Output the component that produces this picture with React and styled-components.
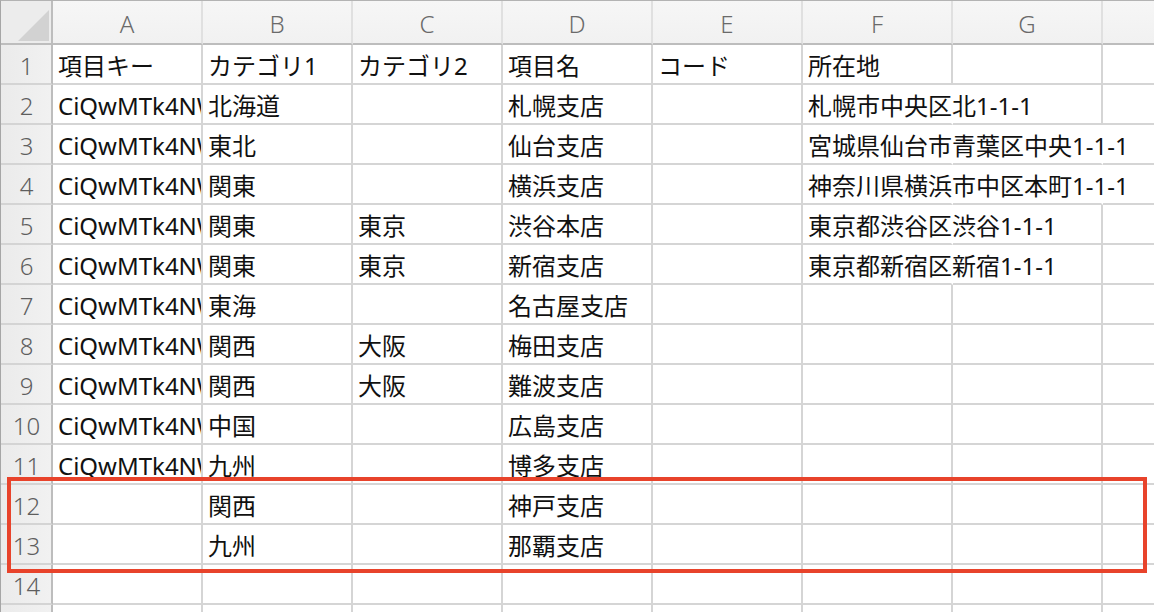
import React from "react";
import styled, { createGlobalStyle } from "styled-components";

const GlobalStyle = createGlobalStyle`
  html, body { margin: 0; padding: 0; background: #ffffff; }
  body { font-family: "Noto Sans", "Noto Sans CJK JP", sans-serif; }
`;

const Sheet = styled.div`
  position: relative;
  width: 1154px;
  height: 612px;
  overflow: hidden;
  box-sizing: border-box;
  border-top: 1px solid #b3b3b3;
  border-left: 1px solid #a6a6a6;
  background: #ffffff;
`;

const Grid = styled.div`
  display: grid;
  grid-template-columns: 52px repeat(8, 150px);
  grid-template-rows: 44px;
  grid-auto-rows: 40px;
`;

const Corner = styled.div`
  position: relative;
  box-sizing: border-box;
  background: #ececec;
  border-right: 2px solid #bdbdbd;
  border-bottom: 2px solid #bdbdbd;
  &::after {
    content: "";
    position: absolute;
    left: 17px;
    top: 9px;
    width: 31px;
    height: 31px;
    background: #d2d2d2;
    clip-path: polygon(100% 0, 100% 100%, 0 100%);
  }
`;

const ColHead = styled.div`
  box-sizing: border-box;
  display: flex;
  align-items: center;
  justify-content: center;
  background: linear-gradient(#f6f6f6, #f1f1f1);
  border-right: 2px solid #e0e0e0;
  border-bottom: 2px solid #bdbdbd;
  color: #6a6a6a;
  font-family: "Noto Sans", sans-serif;
  font-size: 24px;
  font-weight: 300;
  padding-top: 2px;
`;

const RowHead = styled.div`
  box-sizing: border-box;
  display: flex;
  align-items: center;
  justify-content: center;
  background: linear-gradient(90deg, #ebebeb, #f1f1f1);
  border-right: 2px solid #bdbdbd;
  border-bottom: 2px solid #d4d4d4;
  color: #5e5e5e;
  font-family: "Noto Sans", sans-serif;
  font-size: 24px;
  font-weight: 300;
  padding-left: 1px;
  padding-top: 3px;
`;

const Cell = styled.div`
  box-sizing: border-box;
  display: flex;
  align-items: center;
  padding-left: 5px;
  padding-top: 3px;
  min-width: 0;
  border-right: 2px solid ${(p) => (p.$spill ? "transparent" : "#d5d5d5")};
  border-bottom: 2px solid #d5d5d5;
  overflow: ${(p) => (p.$spill ? "visible" : "hidden")};
  color: #111111;
  font-size: 24px;
  white-space: nowrap;
  position: relative;
  z-index: ${(p) => (p.$spill ? 1 : 0)};
`;

const Text = styled.span`
  line-height: 1;
`;

const Highlight = styled.div`
  position: absolute;
  left: 6px;
  top: 476px;
  width: 1140px;
  height: 96px;
  box-sizing: border-box;
  border: 4px solid #e8432b;
  pointer-events: none;
  z-index: 5;
`;

const KEY = "CiQwMTk4NWFkLTBiYzMtNDk";

const columns = ["A", "B", "C", "D", "E", "F", "G", ""];

const rows = [
  ["項目キー", "カテゴリ1", "カテゴリ2", "項目名", "コード", "所在地"],
  [KEY, "北海道", "", "札幌支店", "", "札幌市中央区北1-1-1"],
  [KEY, "東北", "", "仙台支店", "", "宮城県仙台市青葉区中央1-1-1"],
  [KEY, "関東", "", "横浜支店", "", "神奈川県横浜市中区本町1-1-1"],
  [KEY, "関東", "東京", "渋谷本店", "", "東京都渋谷区渋谷1-1-1"],
  [KEY, "関東", "東京", "新宿支店", "", "東京都新宿区新宿1-1-1"],
  [KEY, "東海", "", "名古屋支店"],
  [KEY, "関西", "大阪", "梅田支店"],
  [KEY, "関西", "大阪", "難波支店"],
  [KEY, "中国", "", "広島支店"],
  [KEY, "九州", "", "博多支店"],
  ["", "関西", "", "神戸支店"],
  ["", "九州", "", "那覇支店"],
  [],
  [],
];

const textWidth = (s) =>
  [...s].reduce((w, ch) => w + (ch.charCodeAt(0) > 0x2e80 ? 24 : 12), 0);

function layoutRow(values) {
  const cells = columns.map((_, i) => values[i] || "");
  const spill = cells.map(() => false);
  cells.forEach((v, i) => {
    if (!v) return;
    let need = Math.ceil((textWidth(v) + 10) / 150);
    let j = i;
    while (need > 1 && j + 1 < cells.length && !cells[j + 1]) {
      spill[j] = true;
      j += 1;
      need -= 1;
    }
  });
  return { cells, spill };
}

export default function App() {
  return (
    <>
      <GlobalStyle />
      <Sheet>
        <Grid>
          <Corner />
          {columns.map((c, i) => (
            <ColHead key={`h${i}`}>{c}</ColHead>
          ))}
          {rows.map((r, ri) => {
            const { cells, spill } = layoutRow(r);
            return (
              <React.Fragment key={`r${ri}`}>
                <RowHead>{ri + 1}</RowHead>
                {cells.map((v, ci) => (
                  <Cell key={`c${ri}-${ci}`} $spill={spill[ci]}>
                    {v && <Text>{v}</Text>}
                  </Cell>
                ))}
              </React.Fragment>
            );
          })}
        </Grid>
        <Highlight />
      </Sheet>
    </>
  );
}
